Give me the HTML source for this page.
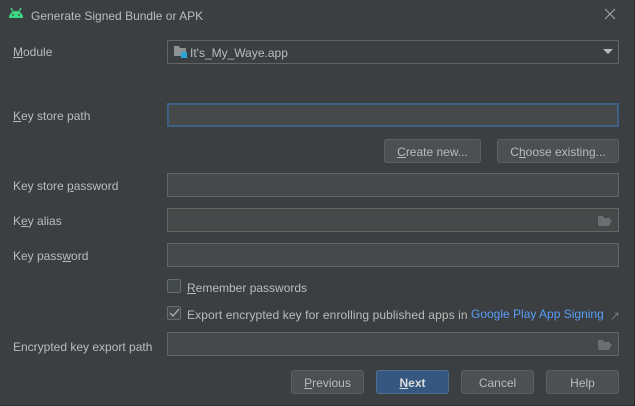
<!DOCTYPE html>
<html><head><style>
*{box-sizing:border-box;margin:0;padding:0}
body{width:635px;height:406px;background:#3c3f41;font-family:"Liberation Sans","Noto Sans CJK KR",sans-serif;font-size:12px;color:#bbbbbb;position:relative;overflow:hidden;border-right:1px solid #2b2b2b;border-bottom:1px solid #2b2b2b}
.a{position:absolute}
.lbl{position:absolute;left:13px}
.f{position:absolute;left:167px;width:452px;height:24px;background:#45494a;border:1px solid #646464}
.btn{position:absolute;height:24px;border:1px solid #5e6060;border-radius:3px;background:#4c5052;text-align:center;line-height:24px;color:#bbbbbb}
.cb{position:absolute;left:167px;width:14px;height:14px;border:1px solid #6b6b6b;border-radius:2px;background:#43494a}
u{text-decoration:underline}
.fold{position:absolute;right:6px;top:6px}
</style></head><body>
<svg class="a" style="left:8px;top:7px" width="16" height="12" viewBox="0 0 16 12"><path d="M1 11 A7 7 0 0 1 15 11 Z" fill="#3ddc84"/><line x1="3" y1="1" x2="5" y2="4.5" stroke="#3ddc84" stroke-width="1.3"/><line x1="13" y1="1" x2="11" y2="4.5" stroke="#3ddc84" stroke-width="1.3"/><circle cx="5" cy="8" r="0.9" fill="#3c3f41"/><circle cx="11" cy="8" r="0.9" fill="#3c3f41"/></svg>
<div class="a" style="left:31px;top:9px;font-size:12px">Generate Signed Bundle or APK</div>
<svg class="a" style="left:604px;top:8px" width="12" height="12"><path d="M1 1L11 11M11 1L1 11" stroke="#a0a0a0" stroke-width="1.2"/></svg>

<div class="lbl" style="top:45px"><u>M</u>odule</div>
<div class="f" style="top:40px;background:#3c3f41;border-radius:2px">
<svg class="a" style="left:6px;top:4px" width="14" height="14"><path d="M0 1h5l1 2h6v8H0z" fill="#8c9194"/><rect x="7" y="7" width="6" height="6" fill="#2fa3d8"/></svg>
<div class="a" style="left:22px;top:5px;color:#bbb">It's_My_Waye.app</div>
<svg class="a" style="right:5px;top:8px" width="10" height="6"><path d="M0 0h10L5 5z" fill="#bbb"/></svg>
</div>

<div class="lbl" style="top:109px"><u>K</u>ey store path</div>
<div class="f" style="top:103px;border:2px solid #3d6185"></div>
<div class="btn" style="left:384px;top:139px;width:97px"><u>C</u>reate new...</div>
<div class="btn" style="left:497px;top:139px;width:122px">C<u>h</u>oose existing...</div>

<div class="lbl" style="top:179px">Key store <u>p</u>assword</div>
<div class="f" style="top:173px"></div>
<div class="lbl" style="top:214px">K<u>e</u>y alias</div>
<div class="f" style="top:208px"><svg class="fold" width="14" height="11"><path d="M0 1h5l1 2h6v2H3L0 10z" fill="#6b6f71"/><path d="M3 5h11l-3 6H0z" fill="#6b6f71"/></svg></div>
<div class="lbl" style="top:249px">Key pass<u>w</u>ord</div>
<div class="f" style="top:243px"></div>

<div class="cb" style="top:279px"></div>
<div class="a" style="left:187px;top:281px"><u>R</u>emember passwords</div>
<div class="cb" style="top:306px"><svg width="12" height="12" style="position:absolute;left:0;top:0"><path d="M2 6l3 3 6-7" stroke="#aaa" stroke-width="1.4" fill="none"/></svg></div>
<div class="a" style="left:187px;top:308px;letter-spacing:0.1px">Export encrypted key for enrolling published apps in</div>
<div class="a" style="left:471px;top:307px;color:#589df6">Google Play App Signing</div>
<div class="a" style="left:610px;top:308px;color:#888;font-size:10px">↗</div>

<div class="lbl" style="top:340px">Encrypted key export path</div>
<div class="f" style="top:332px"><svg class="fold" width="14" height="11"><path d="M0 1h5l1 2h6v2H3L0 10z" fill="#6b6f71"/><path d="M3 5h11l-3 6H0z" fill="#6b6f71"/></svg></div>

<div class="btn" style="left:291px;top:370px;width:73px"><u>P</u>revious</div>
<div class="btn" style="left:376px;top:370px;width:73px;background:#365880;border-color:#4c708c;color:#dddddd;font-weight:bold"><u>N</u>ext</div>
<div class="btn" style="left:461px;top:370px;width:73px">Cancel</div>
<div class="btn" style="left:546px;top:370px;width:73px">Help</div>
</body></html>
